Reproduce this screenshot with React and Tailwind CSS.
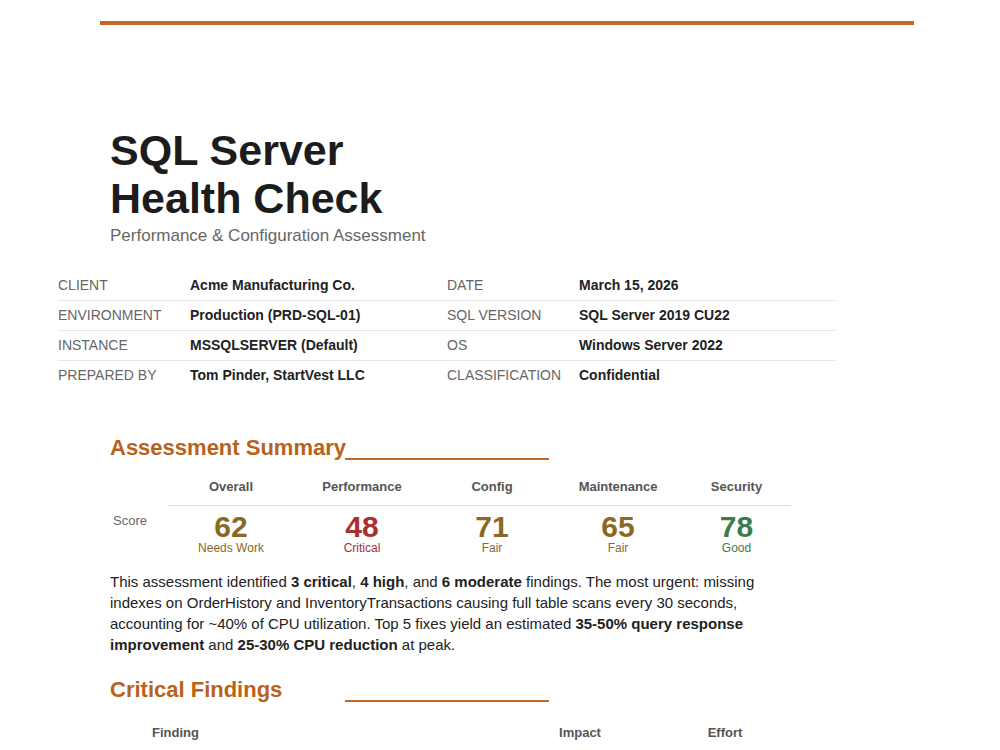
const F = { fontFamily: '"Liberation Sans", Arial, sans-serif' };

const info = [
  ["CLIENT", "Acme Manufacturing Co.", "DATE", "March 15, 2026"],
  ["ENVIRONMENT", "Production (PRD-SQL-01)", "SQL VERSION", "SQL Server 2019 CU22"],
  ["INSTANCE", "MSSQLSERVER (Default)", "OS", "Windows Server 2022"],
  ["PREPARED BY", "Tom Pinder, StartVest LLC", "CLASSIFICATION", "Confidential"],
];

const scores = [
  { h: "Overall", v: 62, l: "Needs Work", c: "text-[#8a6a22]", w: "w-[126px]" },
  { h: "Performance", v: 48, l: "Critical", c: "text-[#a8302f]", w: "w-[136px]" },
  { h: "Config", v: 71, l: "Fair", c: "text-[#8a6a22]", w: "w-[124px]" },
  { h: "Maintenance", v: 65, l: "Fair", c: "text-[#8a6a22]", w: "w-[128px]" },
  { h: "Security", v: 78, l: "Good", c: "text-[#3e7b4c]", w: "w-[109px]" },
];

function Heading({ children, mt }) {
  return (
    <div className={`relative ${mt}`}>
      <h2 className="pl-[110px] text-[22px] font-bold text-[#b8621b] leading-[28px]">{children}</h2>
      <div className="absolute left-[345px] top-[24px] w-[204px] h-[2px] bg-[#c0692a]" />
    </div>
  );
}

export default function App() {
  return (
    <div style={F} className="w-[1000px] h-[750px] overflow-hidden bg-white text-[#222]">
      <div className="ml-[100px] w-[814px] mt-[21px] h-[4px] bg-[#c0692a]" />
      <div className="pl-[110px] pt-[101px]">
        <h1 className="text-[43px] font-bold leading-[48px] text-[#1c1c1c]">SQL Server<br />Health Check</h1>
        <p className="text-[17px] text-[#666] mt-[1px]">Performance &amp; Configuration Assessment</p>
      </div>
      <div className="ml-[58px] w-[778px] mt-[22px] text-[14px]">
        {info.map((r, i) => (
          <div key={i} className={`flex h-[30px] items-center ${i < 3 ? "border-b border-[#e8e8e8]" : ""}`}>
            <span className="w-[132px] text-[#666]">{r[0]}</span>
            <span className="w-[257px] font-bold">{r[1]}</span>
            <span className="w-[132px] text-[#666]">{r[2]}</span>
            <span className="font-bold">{r[3]}</span>
          </div>
        ))}
      </div>
      <Heading mt="mt-[43px]">Assessment Summary</Heading>
      <div className="ml-[110px] mt-[15px]">
        <div className="flex">
          <div className="w-[58px]" />
          <div className="flex w-[623px] border-b border-[#ddd] pb-[9px] text-[13px] font-bold text-[#555]">
            {scores.map((s) => <div key={s.h} className={`${s.w} text-center`}>{s.h}</div>)}
          </div>
        </div>
        <div className="flex">
          <div className="w-[58px] text-[13px] text-[#666] pt-[5px] pl-[3px]">Score</div>
          <div className="flex w-[623px] pt-[7px]">
            {scores.map((s) => (
              <div key={s.h} className={`${s.w} text-center ${s.c}`}>
                <div className="text-[30px] font-bold leading-[28px]">{s.v}</div>
                <div className="text-[12px] leading-[14px]">{s.l}</div>
              </div>
            ))}
          </div>
        </div>
      </div>
      <p className="ml-[110px] w-[660px] mt-[16px] text-[15px] leading-[21px] text-[#222]">
        This assessment identified <b>3 critical</b>, <b>4 high</b>, and <b>6 moderate</b> findings. The most urgent: missing indexes on OrderHistory and InventoryTransactions causing full table scans every 30 seconds, accounting for ~40% of CPU utilization. Top 5 fixes yield an estimated <b>35-50% query response improvement</b> and <b>25-30% CPU reduction</b> at peak.
      </p>
      <Heading mt="mt-[21px]">Critical Findings</Heading>
      <div className="ml-[110px] w-[660px] mt-[19px] flex border-b-2 border-[#eee] pb-[8px] text-[13px] font-bold text-[#555]">
        <span className="w-[400px] pl-[42px]">Finding</span>
        <span className="w-[140px] text-center">Impact</span>
        <span className="w-[120px] text-center pl-[30px]">Effort</span>
      </div>
    </div>
  );
}
